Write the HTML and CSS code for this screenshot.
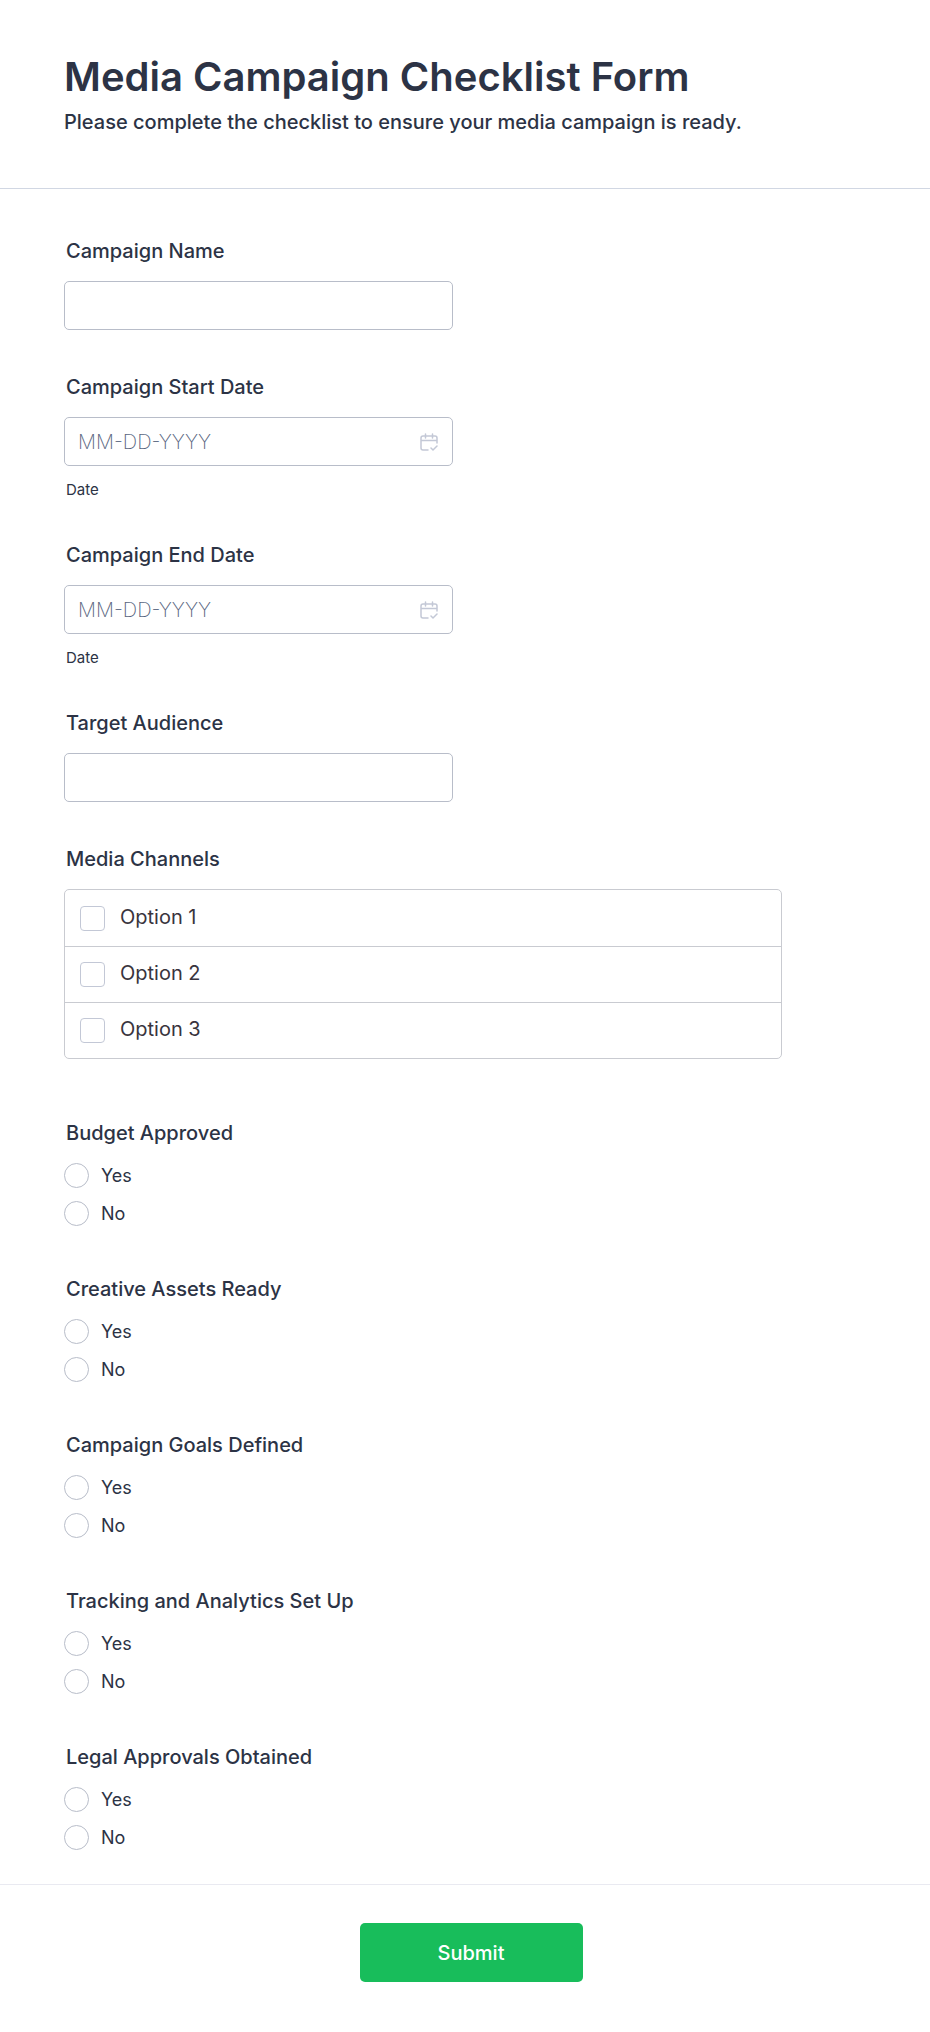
FILE: index.html
```html
<!DOCTYPE html>
<html lang="en">
<head>
<meta charset="utf-8">
<meta name="viewport" content="width=device-width, initial-scale=1">
<title>Media Campaign Checklist Form</title>
<link rel="stylesheet" href="styles.css">
</head>
<body>
<form class="form">
  <header class="form-header">
    <h1 class="form-title">Media Campaign Checklist Form</h1>
    <p class="form-subtitle">Please complete the checklist to ensure your media campaign is ready.</p>
  </header>
  <main class="fields">
    <div class="field">
      <label class="field-label" for="name">Campaign Name</label>
      <input class="text-input" id="name" type="text">
    </div>
    <div class="field">
      <label class="field-label" for="start">Campaign Start Date</label>
      <div class="date-box">
        <input class="date-input" id="start" type="text" placeholder="MM-DD-YYYY">
        <svg class="date-icon" viewBox="0 0 18 18" aria-hidden="true"><path d="M8 17H3a2 2 0 0 1-2-2V5a2 2 0 0 1 2-2h12a2 2 0 0 1 2 2v5M1 7.500h16M5.500 1v4M12.500 1v4M11 15l2 2 4-4"/></svg>
      </div>
      <label class="sub-label" for="start">Date</label>
    </div>
    <div class="field">
      <label class="field-label" for="end">Campaign End Date</label>
      <div class="date-box">
        <input class="date-input" id="end" type="text" placeholder="MM-DD-YYYY">
        <svg class="date-icon" viewBox="0 0 18 18" aria-hidden="true"><path d="M8 17H3a2 2 0 0 1-2-2V5a2 2 0 0 1 2-2h12a2 2 0 0 1 2 2v5M1 7.500h16M5.500 1v4M12.500 1v4M11 15l2 2 4-4"/></svg>
      </div>
      <label class="sub-label" for="end">Date</label>
    </div>
    <div class="field">
      <label class="field-label" for="audience">Target Audience</label>
      <input class="text-input" id="audience" type="text">
    </div>
    <fieldset class="field field-channels">
      <legend class="field-label">Media Channels</legend>
      <div class="option-list">
        <label class="option"><input class="checkbox" type="checkbox"><span class="option-text">Option 1</span></label>
        <label class="option"><input class="checkbox" type="checkbox"><span class="option-text">Option 2</span></label>
        <label class="option"><input class="checkbox" type="checkbox"><span class="option-text">Option 3</span></label>
      </div>
    </fieldset>
    <fieldset class="field field-radios">
      <legend class="field-label">Budget Approved</legend>
      <div class="radio-list">
        <label class="radio-row"><input class="radio" type="radio" name="budget">Yes</label>
        <label class="radio-row"><input class="radio" type="radio" name="budget">No</label>
      </div>
    </fieldset>
    <fieldset class="field field-radios">
      <legend class="field-label">Creative Assets Ready</legend>
      <div class="radio-list">
        <label class="radio-row"><input class="radio" type="radio" name="assets">Yes</label>
        <label class="radio-row"><input class="radio" type="radio" name="assets">No</label>
      </div>
    </fieldset>
    <fieldset class="field field-radios">
      <legend class="field-label">Campaign Goals Defined</legend>
      <div class="radio-list">
        <label class="radio-row"><input class="radio" type="radio" name="goals">Yes</label>
        <label class="radio-row"><input class="radio" type="radio" name="goals">No</label>
      </div>
    </fieldset>
    <fieldset class="field field-radios">
      <legend class="field-label">Tracking and Analytics Set Up</legend>
      <div class="radio-list">
        <label class="radio-row"><input class="radio" type="radio" name="tracking">Yes</label>
        <label class="radio-row"><input class="radio" type="radio" name="tracking">No</label>
      </div>
    </fieldset>
    <fieldset class="field field-radios">
      <legend class="field-label">Legal Approvals Obtained</legend>
      <div class="radio-list">
        <label class="radio-row"><input class="radio" type="radio" name="legal">Yes</label>
        <label class="radio-row"><input class="radio" type="radio" name="legal">No</label>
      </div>
    </fieldset>
  </main>
  <footer class="form-footer">
    <button class="submit" type="submit">Submit</button>
  </footer>
</form>
</body>
</html>
```
FILE: styles.css
```css
* {
  box-sizing: border-box;
}

body {
  margin: 0;
  background: #fff;
  color: #2c3345;
  font-family: Inter, "Liberation Sans", sans-serif;
}

.form-header {
  padding: 52px 52px 53px 64px;
  border-bottom: 1px solid #d1d7e3;
}

.form-title {
  margin: 0;
  font-size: 40px;
  line-height: 50px;
  font-weight: 600;
}

.form-subtitle {
  margin: 7px 0 0;
  font-size: 20px;
  line-height: 26px;
  font-weight: 500;
}

.fields {
  display: flex;
  flex-direction: column;
  gap: 45px;
  padding: 50px 52px 28px 64px;
}

.field {
  min-width: 0;
  margin: 0;
  padding: 0;
  border: 0;
}

.field-label {
  display: block;
  margin-bottom: 18px;
  padding: 0 2px;
  font-size: 20px;
  line-height: 24px;
  font-weight: 500;
}

.text-input,
.date-box {
  display: flex;
  width: 100%;
  max-width: 389px;
  height: 49px;
  border: 1px solid #b8bdc9;
  border-radius: 5px;
  background: #fff;
}

.text-input {
  padding: 0 13px;
  color: inherit;
  font: inherit;
  font-size: 20px;
}

.date-box {
  align-items: center;
  padding: 0 14px 0 13px;
}

.date-input {
  flex: 1;
  min-width: 0;
  padding: 0;
  border: 0;
  outline: 0;
  background: none;
  color: inherit;
  font-family: inherit;
  font-size: 20px;
  font-weight: 200;
}

.date-input::placeholder {
  color: #57647e;
  opacity: 1;
}

.date-icon {
  width: 18px;
  height: 18px;
  fill: none;
  stroke: #c3c8d6;
  stroke-width: 1.5;
  stroke-linecap: round;
  stroke-linejoin: round;
}

.sub-label {
  display: block;
  margin-top: 15px;
  padding: 0 2px;
  font-size: 15px;
  line-height: 17px;
}

.field-channels {
  padding-bottom: 17px;
}

.option-list {
  max-width: 718px;
  border: 1px solid #c9cbd1;
  border-radius: 5px;
}

.option {
  display: flex;
  align-items: center;
  gap: 15px;
  height: 56px;
  padding: 0 15px;
  color: #39343d;
  font-size: 20px;
  line-height: 24px;
  font-weight: 400;
}

.option + .option {
  border-top: 1px solid #c9cbd1;
}

.option-text {
  padding-bottom: 3px;
}

.checkbox,
.radio {
  appearance: none;
  flex: none;
  width: 25px;
  height: 25px;
  margin: 0;
  border: 1px solid #b8bdc9;
  background: #fff;
}

.checkbox {
  border-color: #c3c8d6;
  border-radius: 4px;
}

.radio {
  border-radius: 50%;
}

.checkbox:checked,
.radio:checked {
  border-color: #18bd5b;
  background: #18bd5b;
}

.field-radios {
  padding-bottom: 6px;
}

.radio-list {
  display: flex;
  flex-direction: column;
  align-items: flex-start;
  gap: 13px;
}

.radio-row {
  display: flex;
  align-items: center;
  gap: 12px;
  font-size: 18px;
  line-height: 25px;
}

.form-footer {
  display: flex;
  justify-content: center;
  padding: 38px 52px 50px 64px;
  border-top: 1px solid #e9eaf1;
}

.submit {
  min-width: 223px;
  height: 59px;
  border: 0;
  border-radius: 5px;
  background: #18bd5b;
  color: #fff;
  font-family: inherit;
  font-size: 20px;
  font-weight: 500;
}
```
